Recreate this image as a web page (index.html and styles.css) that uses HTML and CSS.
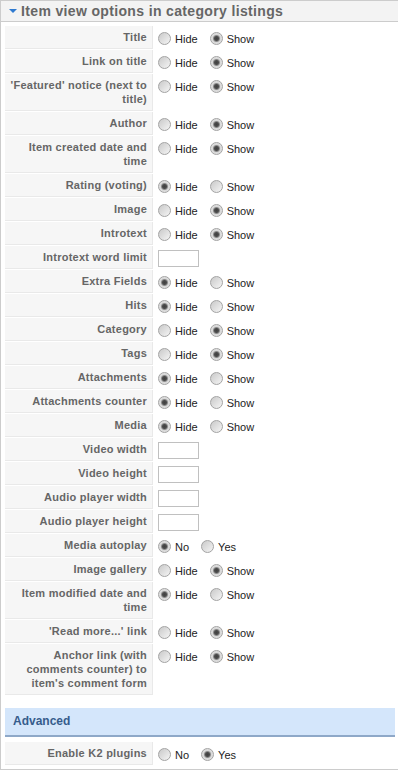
FILE: index.html
```html
<!DOCTYPE html>
<html>
<head>
    <title>Item view options</title>
    <link rel="stylesheet" href="styles.css">
</head>
<body>
    <div class="pane">
        <h3 class="pane-title"><span class="arrow"></span>Item view options in category listings</h3>
        <div class="pane-body">
            <table class="paramlist">
                <tr><td class="key">Title</td><td class="value"><div class="opts"><label class="opt"><input type="radio" name="p1">Hide</label><label class="opt"><input type="radio" name="p1" checked>Show</label></div></td></tr>
                <tr><td class="key">Link on title</td><td class="value"><div class="opts"><label class="opt"><input type="radio" name="p2">Hide</label><label class="opt"><input type="radio" name="p2" checked>Show</label></div></td></tr>
                <tr><td class="key">'Featured' notice (next to title)</td><td class="value"><div class="opts"><label class="opt"><input type="radio" name="p3">Hide</label><label class="opt"><input type="radio" name="p3" checked>Show</label></div></td></tr>
                <tr><td class="key">Author</td><td class="value"><div class="opts"><label class="opt"><input type="radio" name="p4">Hide</label><label class="opt"><input type="radio" name="p4" checked>Show</label></div></td></tr>
                <tr><td class="key">Item created date and time</td><td class="value"><div class="opts"><label class="opt"><input type="radio" name="p5">Hide</label><label class="opt"><input type="radio" name="p5" checked>Show</label></div></td></tr>
                <tr><td class="key">Rating (voting)</td><td class="value"><div class="opts"><label class="opt"><input type="radio" name="p6" checked>Hide</label><label class="opt"><input type="radio" name="p6">Show</label></div></td></tr>
                <tr><td class="key">Image</td><td class="value"><div class="opts"><label class="opt"><input type="radio" name="p7">Hide</label><label class="opt"><input type="radio" name="p7" checked>Show</label></div></td></tr>
                <tr><td class="key">Introtext</td><td class="value"><div class="opts"><label class="opt"><input type="radio" name="p8">Hide</label><label class="opt"><input type="radio" name="p8" checked>Show</label></div></td></tr>
                <tr><td class="key">Introtext word limit</td><td class="value"><input type="text" class="text"></td></tr>
                <tr><td class="key">Extra Fields</td><td class="value"><div class="opts"><label class="opt"><input type="radio" name="p9" checked>Hide</label><label class="opt"><input type="radio" name="p9">Show</label></div></td></tr>
                <tr><td class="key">Hits</td><td class="value"><div class="opts"><label class="opt"><input type="radio" name="p10" checked>Hide</label><label class="opt"><input type="radio" name="p10">Show</label></div></td></tr>
                <tr><td class="key">Category</td><td class="value"><div class="opts"><label class="opt"><input type="radio" name="p11">Hide</label><label class="opt"><input type="radio" name="p11" checked>Show</label></div></td></tr>
                <tr><td class="key">Tags</td><td class="value"><div class="opts"><label class="opt"><input type="radio" name="p12">Hide</label><label class="opt"><input type="radio" name="p12" checked>Show</label></div></td></tr>
                <tr><td class="key">Attachments</td><td class="value"><div class="opts"><label class="opt"><input type="radio" name="p13" checked>Hide</label><label class="opt"><input type="radio" name="p13">Show</label></div></td></tr>
                <tr><td class="key">Attachments counter</td><td class="value"><div class="opts"><label class="opt"><input type="radio" name="p14" checked>Hide</label><label class="opt"><input type="radio" name="p14">Show</label></div></td></tr>
                <tr><td class="key">Media</td><td class="value"><div class="opts"><label class="opt"><input type="radio" name="p15" checked>Hide</label><label class="opt"><input type="radio" name="p15">Show</label></div></td></tr>
                <tr><td class="key">Video width</td><td class="value"><input type="text" class="text"></td></tr>
                <tr><td class="key">Video height</td><td class="value"><input type="text" class="text"></td></tr>
                <tr><td class="key">Audio player width</td><td class="value"><input type="text" class="text"></td></tr>
                <tr><td class="key">Audio player height</td><td class="value"><input type="text" class="text"></td></tr>
                <tr><td class="key">Media autoplay</td><td class="value"><div class="opts"><label class="opt"><input type="radio" name="p16" checked>No</label><label class="opt"><input type="radio" name="p16">Yes</label></div></td></tr>
                <tr><td class="key">Image gallery</td><td class="value"><div class="opts"><label class="opt"><input type="radio" name="p17">Hide</label><label class="opt"><input type="radio" name="p17" checked>Show</label></div></td></tr>
                <tr><td class="key">Item modified date and time</td><td class="value"><div class="opts"><label class="opt"><input type="radio" name="p18" checked>Hide</label><label class="opt"><input type="radio" name="p18">Show</label></div></td></tr>
                <tr><td class="key">'Read more...' link</td><td class="value"><div class="opts"><label class="opt"><input type="radio" name="p19">Hide</label><label class="opt"><input type="radio" name="p19" checked>Show</label></div></td></tr>
                <tr><td class="key">Anchor link (with comments counter) to item's comment form</td><td class="value"><div class="opts"><label class="opt"><input type="radio" name="p20">Hide</label><label class="opt"><input type="radio" name="p20" checked>Show</label></div></td></tr>
            </table>

            <h4 class="section-bar">Advanced</h4>

            <table class="paramlist">
                <tr><td class="key">Enable K2 plugins</td><td class="value"><div class="opts"><label class="opt"><input type="radio" name="p21">No</label><label class="opt"><input type="radio" name="p21" checked>Yes</label></div></td></tr>
            </table>
        </div>
    </div>
</body>
</html>
```

FILE: styles.css
```css
body {
    margin: 0;
    font-family: "Liberation Sans", Arial, sans-serif;
    font-size: 11px;
    background: #fff;
}
.pane {
    border: 1px solid #ccc;
    border-right: none;
}
.pane-title {
    margin: 0;
    height: 20px;
    line-height: 20px;
    padding-left: 8px;
    background: #f3f3f3;
    border-bottom: 1px solid #ccc;
    color: #666;
    font-size: 14px;
    font-weight: bold;
    letter-spacing: 0.35px;
    display: flex;
    align-items: center;
}
.arrow {
    width: 0;
    height: 0;
    border-left: 4px solid transparent;
    border-right: 4px solid transparent;
    border-top: 4px solid #2f7ad0;
    margin-right: 4px;
}
.pane-body {
    padding: 3px 3px 3px 3px;
}
.paramlist {
    border-collapse: separate;
    border-spacing: 1px;
}
.paramlist td {
    vertical-align: top;
    line-height: 14px;
}
.paramlist td.key {
    width: 138px;
    padding: 4px 5px 4px 4px;
    background: #f6f6f6;
    border-bottom: 1px solid #e9e9e9;
    border-right: 1px solid #e9e9e9;
    color: #666;
    font-weight: bold;
    letter-spacing: 0.25px;
    text-align: right;
}
.paramlist td.value {
    padding: 4px 0 0 4px;
}
.opts {
    display: flex;
    gap: 12px;
    margin-top: 2px;
}
.opt {
    display: flex;
    align-items: flex-start;
    color: #222;
}
input[type=radio] {
    appearance: none;
    -webkit-appearance: none;
    width: 13px;
    height: 13px;
    margin: 0 4px 0 0;
    border: 1px solid #a3a3a3;
    border-radius: 50%;
    background: linear-gradient(135deg, #c9c9c9, #f5f5f5);
}
input[type=radio]:checked {
    background: radial-gradient(circle, #3f3f3f 0, #4c4c4c 2px, #8c8c8c 3px, #d8d8d8 4px, #ececec 100%);
}
input.text {
    width: 39px;
    height: 15px;
    margin: 0;
    padding: 0;
    border: 1px solid #c0c0c0;
    display: block;
}
.section-bar {
    margin: 12px 0 0 1px;
    height: 27px;
    line-height: 27px;
    padding-left: 8px;
    background: #d4e6fb;
    border-bottom: 2px solid #8ea8c8;
    color: #365c8c;
    font-size: 12px;
    font-weight: bold;
}
.section-bar + .paramlist {
    margin-top: 4px;
}
```
